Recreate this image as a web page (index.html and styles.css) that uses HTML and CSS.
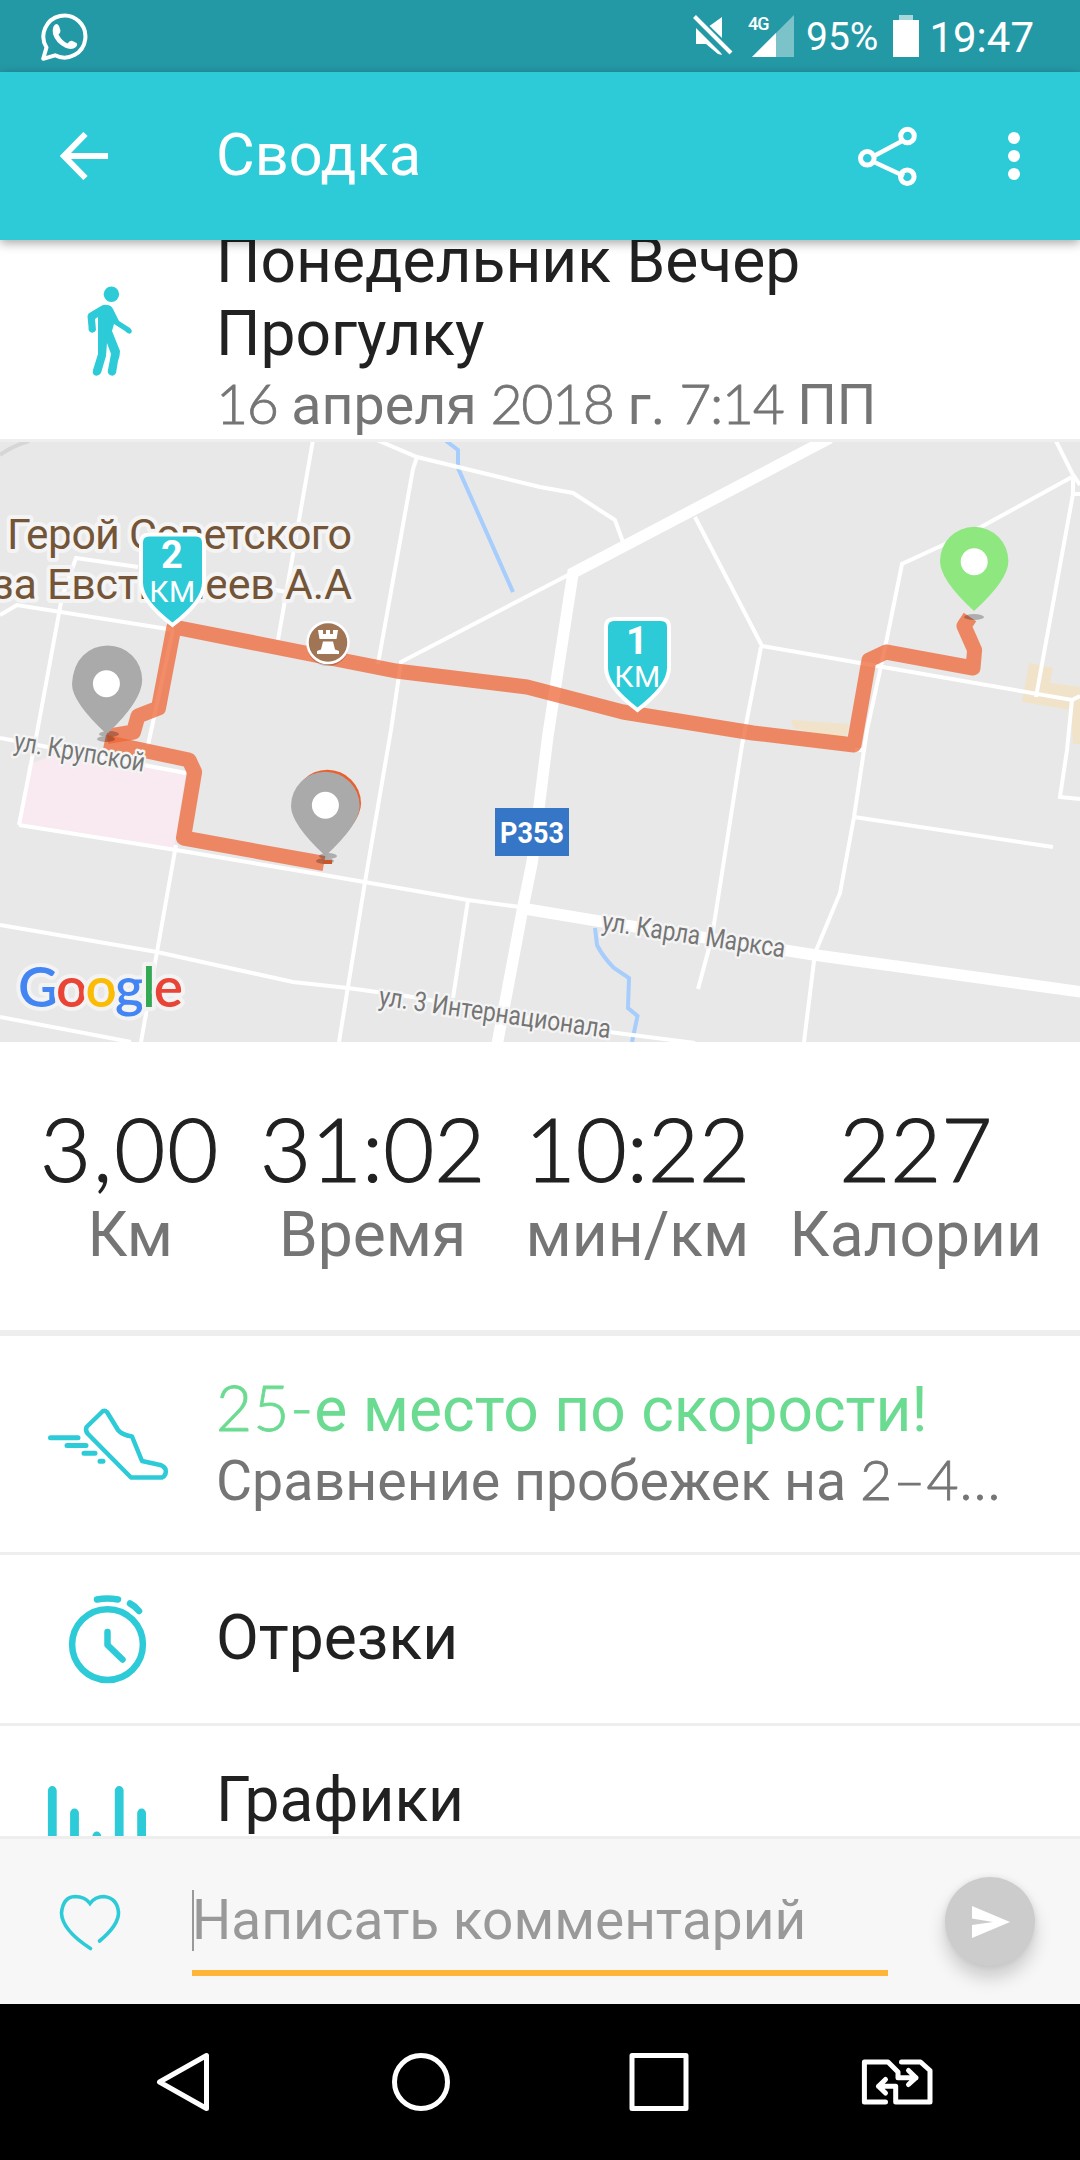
FILE: index.html
```
<!DOCTYPE html>
<html lang="ru">
<head>
    <meta charset="UTF-8">
    <meta name="viewport" content="width=device-width, initial-scale=1.0">
    <title>Сводка</title>
    <link rel="stylesheet" href="styles.css">
</head>
<body>
    <div class="screen">
        <!-- Status bar -->
        <div class="status-bar">
            <svg class="whatsapp" width="50" height="50" viewBox="0 0 50 50">
                <path d="M3.2 47.8 L6.5 36.5 A21 21 0 1 1 15 44.3 Z" fill="none" stroke="#fff" stroke-width="4" stroke-linejoin="round"/>
                <path d="M13.5 15.5 q3 -4.5 5.5 -.5 l1.5 4.5 q.2 2 -2 4 q3.5 6.5 9 9 q2.5 -3.5 5 -2.5 l4 2 q1.5 1.5 -.5 4 q-4.5 3.5 -11 .5 q-9.5 -5 -12 -13.5 q-.8 -4.5 .5 -7.5 z" fill="#fff"/>
            </svg>
            <div class="status-right">
                <svg class="mute" width="40" height="42" viewBox="692 14 40 42">
                    <path d="M707 27 L721 17 V41 Z M695 28 L720 53 L721 55 L717 54 L705 44 H695 Z" fill="#fff"/>
                    <path d="M693 17 L730 53" stroke="#2499a6" stroke-width="9"/>
                    <path d="M693.5 16.5 L730 53" stroke="#fff" stroke-width="4"/>
                </svg>
                <div class="signal">
                    <span class="network">4G</span>
                    <svg width="42" height="42" viewBox="0 0 42 42">
                        <path d="M42 0 V42 H0 Z" fill="#fff" opacity=".4"/>
                        <path d="M24 18 V42 H0 Z" fill="#fff"/>
                    </svg>
                </div>
                <span class="percent">95%</span>
                <svg class="battery" width="26" height="42" viewBox="0 0 26 42">
                    <path d="M6 0 H20 V5 H6 Z" fill="#fff" opacity=".6"/>
                    <path d="M0 5 H26 V42 H0 Z" fill="#fff"/>
                </svg>
                <span class="clock">19:47</span>
            </div>
        </div>

        <!-- App bar -->
        <div class="app-bar">
            <svg class="back" width="48" height="48" viewBox="0 0 48 48">
                <path d="M48 24 H5 M25.5 2 L4 24 L25.5 46" fill="none" stroke="#fff" stroke-width="6"/>
            </svg>
            <h1 class="bar-title">Сводка</h1>
            <svg class="share" width="60" height="62" viewBox="0 0 60 62">
                <path d="M46 15 L16 31 M46 51 L16 37" stroke="#fff" stroke-width="4.5"/>
                <g fill="none" stroke="#fff" stroke-width="5">
                    <circle cx="49.5" cy="11" r="6.8"/>
                    <circle cx="9.3" cy="33.3" r="6.8"/>
                    <circle cx="49.3" cy="51.7" r="6.8"/>
                </g>
            </svg>
            <svg class="more" width="12" height="48" viewBox="0 0 12 48">
                <g fill="#fff">
                    <circle cx="6" cy="6" r="6"/>
                    <circle cx="6" cy="24" r="6"/>
                    <circle cx="6" cy="42" r="6"/>
                </g>
            </svg>
        </div>

        <div class="content">
            <!-- Activity header -->
            <div class="row activity">
                <div class="icon">
                    <svg width="216" height="199" viewBox="0 240 216 199">
                        <circle cx="111.4" cy="294.3" r="7.7" fill="#2dcad7"/>
                        <path d="M107 305 Q111 305 113 309 L119 321 L130 328 Q133 331 131 333 Q129 335 125 331 L114 324 L112 331 L120 351 Q120 356 118 361 L116 373 Q114 377 110 375 Q107 373 108 370 L111 354 L107 343 L106 356 L101 373 Q98 377 94 375 Q92 373 93 370 L98 354 V317 L95 319 L96 330 Q94 334 90 332 Q88 330 88.5 327 L87.5 316 Q88 313 91 312 L102 305.5 Q104 304.5 107 305 Z" fill="#2dcad7"/>
                    </svg>
                </div>
                <div class="row-text">
                    <h2 class="row-title">Понедельник Вечер<br>Прогулку</h2>
                    <p class="row-sub"><span class="num">16</span> апреля <span class="num">2018</span> г. <span class="num">7:14</span> ПП</p>
                </div>
            </div>

            <!-- Route map -->
            <svg class="map" width="1080" height="600" viewBox="0 442 1080 600">
                <rect x="0" y="442" width="1080" height="600" fill="#e8e8e8"/>
                <path d="M28 765 L60 752 L186 773 L174 848 L20 823 Z" fill="#f8eaf0"/>
                <path d="M791 720 L849 724 L846 740 L793 728 Z" fill="#f0e3c9"/>
                <path d="M1029 663 L1053 668 L1050 683 L1080 687 V744 H1073 L1071 710 L1022 702 Z" fill="#f0e3c9"/>
                <path d="M0 455 Q12 446 29 441" class="track"/>
                <g class="water">
                    <path d="M446 441 L458 450 V468 L513 592"/>
                    <path d="M595 928 L597 945 Q603 957 614 968 L629 978 L628 1008 L637.5 1016 L632 1042"/>
                </g>
                <g class="street">
                    <path d="M377 440 L417 457 L540 487 L573 493 L615 520 L623 542"/>
                    <path d="M313 440 L278 640"/>
                    <path d="M417 457 L413 469 L378 664"/>
                    <path d="M0 615 L17 605 L174 630"/>
                    <path d="M138 567 L76 558 L62 597 L36 738 L19 825"/>
                    <path d="M0 738 L186 773"/>
                    <path d="M173 630 L148 745"/>
                    <path d="M250 585 L286 592"/>
                    <path d="M19 825 L176 850 L324 875 L468 900 L520 907"/>
                    <path d="M176 845 L157 952 L141 1042"/>
                    <path d="M0 925 L157 952 L293 982 L348 988 L413 997 L609 1032 L695 1043"/>
                    <path d="M572 573 L401 662 L391 730 L365 882 L339 1042"/>
                    <path d="M468 900 L453 998"/>
                    <path d="M0 1017 L131 1042"/>
                    <path d="M695 517 L762 646 L860 663 L1072 700 L1080 696"/>
                    <path d="M761 647 L742 745 L712 937 L698 989"/>
                    <path d="M1072 477 L981 527 L943 545 L902 564 L886 643 L867 730 L854 817 L840 893 L815 953 L804 1042"/>
                    <path d="M1056 441 L1072 473 L1080 485 M1073 477 V494 L1036 697 M1073 494 H1080"/>
                    <path d="M1072 700 L1067 750 L1060 797 L1080 799"/>
                    <path d="M854 817 L1053 847"/>
                    <path d="M855 750 H866"/>
                </g>
                <g class="highway">
                    <path d="M830 438 L573 573 L548 735 L532 863 L523 907 L497 1045"/>
                    <path d="M520 908 L592 920 L815 955 L1082 992"/>
                </g>

                <g class="label place">
                    <text x="7" y="549" textLength="345">Герой Советского</text>
                    <text x="-95" y="599" textLength="447">Союза Евстигнеев А.А</text>
                </g>
                <g class="route">
                    <path d="M970 617 L964 626 L974.6 650 L973 668 L886 652 L869 660 L854 745 L753 733 L623 712 L527 687 L396 671 L174 627 L158.5 708 L138 716 L133.5 732 L107 736.5"/>
                    <path d="M104.5 742 L189 760 L194.6 772 L183.5 838 L324 863.5"/>
                </g>
                <g class="label street-name">
                    <text transform="translate(13 750) rotate(9.5)" textLength="132" lengthAdjust="spacingAndGlyphs">ул. Крупской</text>
                    <text transform="translate(601 930) rotate(8.6)" textLength="185" lengthAdjust="spacingAndGlyphs">ул. Карла Маркса</text>
                    <text transform="translate(378 1005) rotate(8.2)" textLength="234" lengthAdjust="spacingAndGlyphs">ул. 3 Интернационала</text>
                </g>
                <rect x="495" y="808" width="74" height="48" fill="#3676c6"/>
                <text x="532" y="843" class="badge" textLength="64" lengthAdjust="spacingAndGlyphs">Р353</text>

                <!-- Landmark -->
                <circle cx="328" cy="645" r="21" fill="#000" opacity=".2"/>
                <circle cx="328" cy="642.5" r="20.5" fill="#a07556" stroke="#fff" stroke-width="2.5"/>
                <path d="M318 630 h5 v4 h3 v-4 h4 v4 h3 v-4 h5 l-1.5 9 h-17 z M323 641.5 h10 l2 8 4 1.5 v3 h-22 v-3 l4 -1.5 z" fill="#fff"/>

                <!-- Kilometre markers -->
                <g class="km">
                    <path d="M149 534.5 H196 Q204 534.5 204 542.5 V583 Q204 601 172.5 625 Q141 601 141 583 V542.5 Q141 534.5 149 534.5 Z"/>
                    <text x="172" y="568" class="km-num">2</text>
                    <text x="172.5" y="602" class="km-unit">КМ</text>
                    <path d="M614 619 H661 Q669 619 669 627 V668 Q669 686 637.5 710 Q606 686 606 668 V627 Q606 619 614 619 Z"/>
                    <text x="637" y="654" class="km-num">1</text>
                    <text x="637.5" y="687" class="km-unit">КМ</text>
                </g>

                <!-- Pins -->
                <g fill="#000" opacity=".25">
                    <ellipse cx="974" cy="617" rx="10" ry="3"/>
                    <ellipse cx="109" cy="734" rx="10" ry="3"/>
                    <ellipse cx="106" cy="739" rx="9" ry="3"/>
                    <ellipse cx="325" cy="861" rx="9" ry="3"/>
                    <ellipse cx="328" cy="856" rx="9" ry="3"/>
                </g>
                <path d="M323 860 H332 V864 H323 Z" fill="#c8552c"/>
                <path d="M974 611 Q940 580 940 561 A34.2 34.2 0 0 1 1008.4 561 Q1008.4 580 974 611 Z" fill="#8ee87f"/>
                <path d="M108 733 Q73 698 73 680 A34.6 34.6 0 0 1 142.2 680 Q142.2 700 108 733 Z" fill="#aaa"/>
                <path d="M106.5 734 Q72 702 72 684 A34.2 34.2 0 0 1 140.5 684 Q140.5 702 106.5 734 Z" fill="#aaa"/>
                <path d="M327 853 Q293.6 822 293.6 803.5 A33.7 33.7 0 0 1 361 803.5 Q361 822 327 853 Z" fill="#e85f30"/>
                <path d="M325.4 856 Q291 824 291 806 A34.3 34.3 0 0 1 359.7 806 Q359.7 824 325.4 856 Z" fill="#aaa"/>
                <g fill="#fff">
                    <circle cx="974.2" cy="561.7" r="13.5"/>
                    <circle cx="106.4" cy="683.7" r="13.5"/>
                    <circle cx="325.4" cy="805.3" r="13.5"/>
                </g>

                <text x="18" y="1007" class="google" textLength="165"><tspan fill="#4485f4">G</tspan><tspan fill="#e94435">o</tspan><tspan fill="#fbbc06">o</tspan><tspan fill="#4485f4">g</tspan><tspan fill="#34a853">l</tspan><tspan fill="#e94435">e</tspan></text>
            </svg>

            <!-- Stats -->
            <div class="stats">
                <div class="stat distance"><span class="value">3,00</span><span class="unit">Км</span></div>
                <div class="stat"><span class="value">31:02</span><span class="unit">Время</span></div>
                <div class="stat"><span class="value">10:22</span><span class="unit">мин/км</span></div>
                <div class="stat"><span class="value">227</span><span class="unit">Калории</span></div>
            </div>

            <div class="row pace">
                <div class="icon">
                    <svg width="216" height="216" viewBox="0 1336 216 216">
                        <g fill="none" stroke="#2dcad7" stroke-linejoin="round" stroke-linecap="round">
                            <path d="M103 1411 L86.5 1427 Q85 1431 88 1434 L131 1477.5 H162 Q167 1475 165.5 1469 Q163 1465 158 1464.5 L142 1461 L132 1436.5 Q122 1435 118 1430 L107 1412 Q105 1410 103 1411 Z" stroke-width="4.5"/>
                            <path d="M50.5 1437.7 H78 M67 1445.4 H86 M84 1453.2 H95 M100 1461.2 H103" stroke-width="5"/>
                        </g>
                    </svg>
                </div>
                <div class="row-text">
                    <h2 class="row-title green"><span class="num">25-</span>е место по скорости!</h2>
                    <p class="row-sub">Сравнение пробежек на <span class="num">2–4...</span></p>
                </div>
            </div>

            <div class="row splits">
                <div class="icon">
                    <svg width="216" height="168" viewBox="0 1555 216 168">
                        <g fill="none" stroke="#2dcad7" stroke-width="6.5" stroke-linecap="round" stroke-linejoin="round">
                            <circle cx="107.5" cy="1644.6" r="35.4"/>
                            <path d="M97 1599.5 Q107 1597.5 118 1599.5 M130 1603.5 Q135 1606 139 1611"/>
                            <path d="M107.5 1632 V1645 L122.5 1659.5"/>
                        </g>
                    </svg>
                </div>
                <div class="row-text"><h2 class="row-title">Отрезки</h2></div>
            </div>

            <div class="row charts">
                <div class="icon">
                    <svg width="216" height="168" viewBox="0 1726 216 168">
                        <path d="M52.3 1790.5 V1880 M74.5 1813 V1880 M96.8 1836 V1880 M119.2 1790.5 V1880 M141.6 1813 V1880" stroke="#2dcad7" stroke-width="8.8" stroke-linecap="round"/>
                    </svg>
                </div>
                <div class="row-text"><h2 class="row-title">Графики</h2></div>
            </div>
        </div>

        <!-- Comment bar -->
        <div class="comment-bar">
            <svg class="heart" width="62" height="58" viewBox="59 1893 62 58">
                <path d="M90.5 1948.5 Q62 1930 61.5 1913 Q63 1897 75 1896.5 Q85 1896.5 90 1903.5 Q95 1896.5 104 1896.5 Q117 1898 118.5 1912 Q119 1925 99.5 1941" fill="none" stroke="#2dcad7" stroke-width="3.6" stroke-linecap="round"/>
            </svg>
            <div class="field"><span class="placeholder">Написать комментарий</span></div>
            <button class="send">
                <svg width="38" height="32" viewBox="0 0 38 32">
                    <path d="M0 0 L38 16 L0 32 V19 L21 16 L0 12.5 Z" fill="#fff"/>
                </svg>
            </button>
        </div>

        <!-- Navigation bar -->
        <div class="nav-bar">
            <svg class="nav-back" width="54" height="60" viewBox="0 0 54 60"><path d="M50.5 3.5 V56.5 L3.5 30 Z" fill="none" stroke="#fff" stroke-width="5" stroke-linejoin="round"/></svg>
            <svg class="nav-home" width="60" height="60" viewBox="0 0 60 60"><circle cx="30" cy="30" r="26.5" fill="none" stroke="#fff" stroke-width="5"/></svg>
            <svg class="nav-recent" width="60" height="60" viewBox="0 0 60 60"><rect x="3" y="3.5" width="54" height="53" fill="none" stroke="#fff" stroke-width="5" stroke-linejoin="round"/></svg>
            <svg class="nav-sim" width="72" height="60" viewBox="861 2052 72 60">
                <g fill="none" stroke="#fff" stroke-width="5" stroke-linecap="round" stroke-linejoin="round">
                    <path d="M885.5 2102 H864.4 V2062 H888 L898 2072 V2077.7 H916 M908.5 2070.5 L916 2077.7 L908.5 2084.5"/>
                    <path d="M901.5 2062 H920.5 L930 2070.5 V2102 H895.7 V2086.3 H878.5 M885.5 2079.5 L878.5 2086.3 L885.5 2093"/>
                </g>
            </svg>
        </div>
    </div>
</body>
</html>
```
FILE: styles.css
```
* {
    margin: 0;
    padding: 0;
    box-sizing: border-box;
}

body {
    width: 1080px;
    height: 2160px;
    overflow: hidden;
    font-family: Roboto, sans-serif;
    background-color: #fff;
    color: #212121;
}

svg {
    display: block;
    flex-shrink: 0;
}

.screen {
    display: flex;
    flex-direction: column;
    height: 2160px;
}

/* Status bar */
.status-bar {
    display: flex;
    justify-content: space-between;
    height: 72px;
    padding: 0 46px 0 40px;
    background-color: #2499a6;
    color: #fff;
    flex-shrink: 0;
}

.whatsapp {
    margin-top: 11px;
}

.status-right {
    display: flex;
    align-items: flex-start;
    padding-top: 14px;
}

.signal {
    display: flex;
    margin-left: 15px;
    padding-top: 1px;
}

.network {
    width: 20px;
    margin-right: -16px;
    font-size: 18px;
    font-weight: 500;
    line-height: 17px;
    letter-spacing: -1px;
}

.percent {
    margin-left: 12px;
    font-size: 39px;
    line-height: 46px;
}

.battery {
    margin: 1px 0 0 15px;
}

.clock {
    margin-left: 10px;
    font-size: 42px;
    line-height: 47px;
}

/* App bar */
.app-bar {
    position: relative;
    z-index: 1;
    display: flex;
    align-items: center;
    height: 168px;
    padding: 0 60px;
    background-color: #2dcad7;
    color: #fff;
    box-shadow: 0 3px 10px rgba(0, 0, 0, 0.35);
    flex-shrink: 0;
}

.bar-title {
    flex: 1;
    margin-left: 108px;
    font-size: 59.5px;
    font-weight: 400;
    line-height: 68px;
    padding-bottom: 2px;
}

.share {
    margin-right: 90px;
}

/* Scrolled content */
.content {
    height: 1596px;
    overflow: hidden;
    flex-shrink: 0;
}

.row {
    display: flex;
    border-bottom: 3px solid #eee;
}

.icon {
    width: 216px;
    flex-shrink: 0;
}

.row-title {
    font-size: 62.3px;
    font-weight: 400;
    line-height: 73px;
    white-space: nowrap;
}

.row-sub {
    margin-top: 3px;
    color: #757575;
    font-size: 55.5px;
    line-height: 66px;
    white-space: nowrap;
}

.num {
    font-family: Lato, sans-serif;
    font-weight: 300;
    line-height: 1;
    letter-spacing: -1.4px;
    -webkit-text-stroke: 0.8px currentColor;
}

.green {
    color: #6cdb92;
}

.activity {
    align-items: flex-end;
    height: 202px;
}

.pace {
    height: 219px;
}

.pace .row-text {
    padding-top: 37px;
}

.pace .num {
    letter-spacing: 1px;
}

.splits {
    height: 171px;
    align-items: center;
}

.splits .row-text {
    padding-bottom: 3px;
}

.charts .row-text {
    padding-top: 37px;
}

/* Map */
.track {
    fill: none;
    stroke: #d6d6d6;
    stroke-width: 4;
}

.water {
    fill: none;
    stroke: #a6cdfc;
    stroke-width: 4;
}

.street {
    fill: none;
    stroke: #fff;
    stroke-width: 4;
}

.highway {
    fill: none;
    stroke: #fff;
    stroke-width: 11.5;
}

.route {
    fill: none;
    stroke-width: 15;
    stroke-linejoin: round;
}

.route path {
    stroke: #ef6635;
    opacity: 0.75;
}

.label {
    stroke: #f4f4f4;
    stroke-width: 8;
    stroke-linejoin: round;
    paint-order: stroke;
}

.place {
    fill: #755538;
    font-size: 43px;
}

.street-name {
    fill: #757575;
    stroke-width: 5;
    font-size: 27px;
}

.badge {
    fill: #fff;
    font-size: 30px;
    font-weight: 700;
    text-anchor: middle;
}

.km path {
    fill: #2dcad7;
    stroke: #fff;
    stroke-width: 4;
}

.km text {
    fill: #fff;
    text-anchor: middle;
}

.km-num {
    font-size: 38px;
    font-weight: 700;
}

.km-unit {
    font-size: 30px;
    letter-spacing: 0.5px;
}

.google {
    font-family: Lato, sans-serif;
    font-size: 55px;
    font-weight: 600;
    stroke: #f3f3f3;
    stroke-width: 8;
    stroke-linejoin: round;
    paint-order: stroke;
}

/* Stats */
.stats {
    display: flex;
    justify-content: space-between;
    height: 294px;
    padding: 53px 38px 0 40px;
    border-bottom: 6px solid #eee;
}

.stat {
    display: flex;
    flex-direction: column;
    align-items: center;
}

.value {
    font-family: Lato, sans-serif;
    font-size: 88px;
    font-weight: 300;
    line-height: 107px;
    -webkit-text-stroke: 1.2px currentColor;
}

.distance .value {
    letter-spacing: 2px;
}

.unit {
    color: #757575;
    font-size: 62.3px;
    line-height: 65px;
}

/* Comment bar */
.comment-bar {
    display: flex;
    height: 168px;
    padding-left: 59px;
    border-top: 3px solid #eee;
    background-color: #f7f7f7;
    flex-shrink: 0;
}

.heart {
    margin-top: 54px;
}

.field {
    width: 696px;
    height: 137px;
    margin-left: 71px;
    padding-top: 51px;
    border-bottom: 6px solid #ffb638;
}

.placeholder {
    display: block;
    border-left: 2px solid #999;
    color: #999;
    font-size: 55px;
    line-height: 61px;
    text-indent: -2px;
    white-space: nowrap;
}

.send {
    display: flex;
    align-items: center;
    justify-content: center;
    width: 90px;
    height: 89px;
    margin: 38px 0 0 57px;
    padding-left: 2px;
    border: none;
    border-radius: 50%;
    background-color: #ccc;
    box-shadow: 0 12px 18px rgba(0, 0, 0, 0.18), 0 0 6px rgba(0, 0, 0, 0.08);
}

/* Navigation bar */
.nav-bar {
    display: flex;
    align-items: center;
    height: 156px;
    padding-left: 156px;
    background-color: #000;
    flex-shrink: 0;
}

.nav-home {
    margin-left: 181px;
}

.nav-recent {
    margin-left: 178px;
}

.nav-sim {
    margin-left: 172px;
}
```
